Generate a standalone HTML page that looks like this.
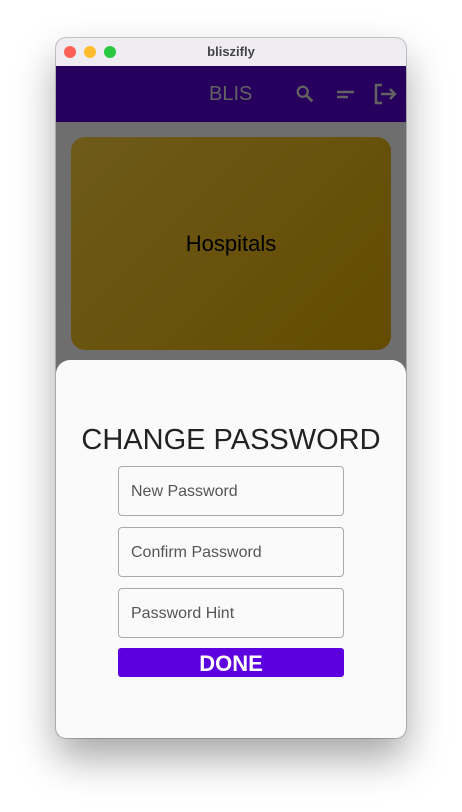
<!DOCTYPE html>
<html><head><style>
body{margin:0;width:462px;height:812px;background:#fff;position:relative;overflow:hidden;font-family:"Liberation Sans",sans-serif}
.win{position:absolute;left:56px;top:38px;width:350px;height:700px;border-radius:10px;overflow:hidden;box-shadow:0 20px 40px rgba(0,0,0,.35),0 0 0 1px rgba(0,0,0,.2);background:#6e6e6e}
.tb{height:28px;background:#efedf2;position:relative;text-align:center;font-weight:bold;font-size:13px;line-height:28px;color:#444}
.dot{position:absolute;top:8px;width:12px;height:12px;border-radius:50%}
.ab{height:56px;background:#26005c;position:relative}
.card{position:absolute;left:15px;top:99px;width:320px;height:213px;border-radius:14px;background:linear-gradient(135deg,#6e5a1a,#634b00);font-size:22px;color:#000;text-align:center;line-height:213px}
.sheet{position:absolute;left:0;top:322px;width:350px;height:378px;background:#fafafa;border-radius:14px 14px 0 0}
.h{position:absolute;top:64px;width:100%;text-align:center;font-size:29px;color:#222}
.f{position:absolute;left:62px;width:226px;height:50px;border:1px solid #aaa;border-radius:4px;box-sizing:border-box;font-size:16px;color:#555;padding-left:12px;line-height:50px}
.btn{position:absolute;left:62px;top:288px;width:226px;height:29px;background:#5c00e0;border-radius:3px;color:#fff;font-weight:bold;font-size:22px;text-align:center;line-height:31px}
</style></head><body>
<div class="win">
<div class="tb"><span class="dot" style="left:8px;background:#fe5f57"></span><span class="dot" style="left:28px;background:#febc2e"></span><span class="dot" style="left:48px;background:#28c840"></span>bliszifly</div>
<div class="ab">
<div style="position:absolute;left:153px;top:17px;font-size:20px;color:#626262">BLIS</div>
<svg style="position:absolute;left:238px;top:17px" width="22" height="22" viewBox="0 0 24 24"><circle cx="9.5" cy="9.5" r="5.5" fill="none" stroke="#626262" stroke-width="2.5"/><path d="M13.5 13.5L20 20" stroke="#626262" stroke-width="3"/></svg>
<svg style="position:absolute;left:280px;top:18px" width="20" height="20" viewBox="0 0 20 20"><path d="M1 8h17M1 13h11" stroke="#626262" stroke-width="2.5"/></svg>
<svg style="position:absolute;left:316px;top:16px" width="26" height="24" viewBox="0 0 26 24"><path d="M10 3H4v18h6" fill="none" stroke="#626262" stroke-width="2.5"/><path d="M9 12h14M18 7l5 5-5 5" fill="none" stroke="#626262" stroke-width="2.5"/></svg>
</div>
<div class="card">Hospitals</div>
<div class="sheet">
<div class="h">CHANGE PASSWORD</div>
<div class="f" style="top:106px">New Password</div>
<div class="f" style="top:167px">Confirm Password</div>
<div class="f" style="top:228px">Password Hint</div>
<div class="btn">DONE</div>
</div>
</div>
</body></html>
